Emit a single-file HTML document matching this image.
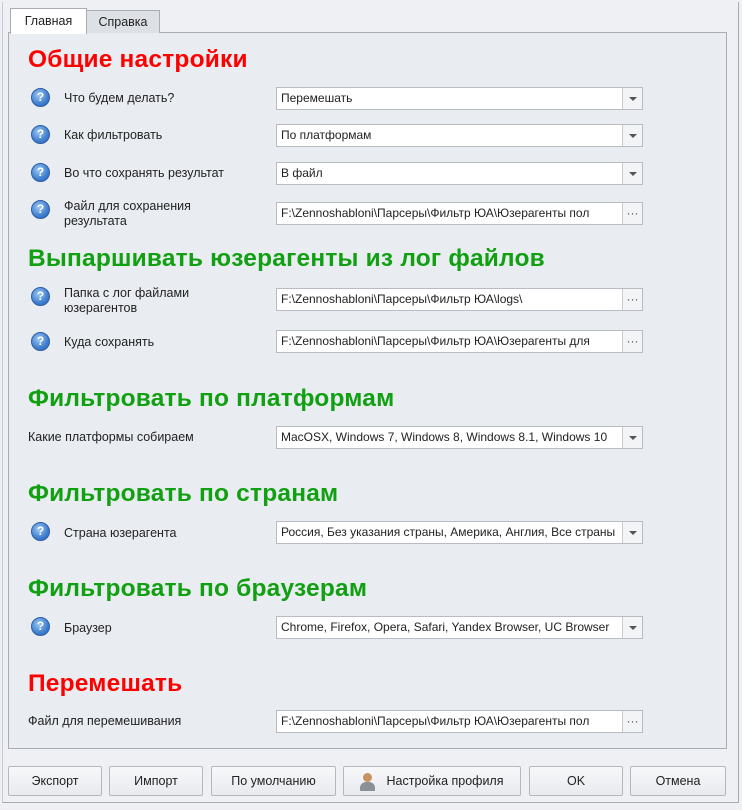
<!DOCTYPE html><html><head><meta charset="utf-8"><style>
body{margin:0;width:742px;height:810px;background:#eef0f3;font-family:"Liberation Sans",sans-serif;position:relative;overflow:hidden;font-size:12.5px;color:#222}
.a{position:absolute}
.frame{left:2px;top:2px;width:735px;height:800px;border:1px solid #a8acb2;border-top:none;border-left:1px solid #c8ccd0}
.panel{left:8px;top:32px;width:717px;height:715px;border:1px solid #a9adb3;background:#e9ecf0}
.tab{top:8px;height:24px;border:1px solid #a9adb3;border-bottom:none;line-height:24px;text-align:center;font-size:12.5px}
.h{font-weight:bold;font-size:24.5px;letter-spacing:0.2px;left:28px}
.r{color:#f00}.g{color:#11a011}
.q{width:17px;height:17px;border-radius:50%;background:radial-gradient(circle at 40% 35%,#9cc8f5,#3f7fd0 60%,#2a5fae);border:1px solid #2d5ea6;color:#fff;font-weight:bold;font-size:12px;text-align:center;line-height:17px;left:31px}
.l{left:64px}
.f{left:276px;width:365px;height:21px;border:1px solid #b8bcc2;background:#fff;line-height:21px;font-size:12px}
.f span{padding-left:4px;white-space:nowrap;overflow:hidden;display:block;width:338px}
.f span.e{text-overflow:ellipsis;width:336px}
.f i{position:absolute;right:0;top:0;width:19px;height:21px;border-left:1px solid #c8ccd2;background:#f3f4f6;font-style:normal;text-align:center;color:#555}
.ar:after{content:"";position:absolute;left:6px;top:9px;border:4px solid transparent;border-top:4px solid #555}
.b{top:766px;height:28px;border:1px solid #b4b8be;border-radius:2px;background:linear-gradient(#f7f8fa,#e8eaee);text-align:center;line-height:28px;font-size:12.5px}
</style></head><body>
<div class="a frame"></div>
<div class="a panel"></div>
<div class="a tab" style="left:10px;width:75px;background:#fff;height:25px">Главная</div>
<div class="a tab" style="left:86px;width:72px;background:#dde0e5;top:10px;height:22px;line-height:22px">Справка</div>
<div class="a" style="left:11px;top:32px;width:73px;height:2px;background:#fff"></div>

<div class="a h r" style="top:46px">Общие настройки</div>
<div class="a q" style="top:88px">?</div><div class="a l" style="top:91px">Что будем делать?</div>
<div class="a f" style="top:87px"><span>Перемешать</span><i class="ar"></i></div>
<div class="a q" style="top:125px">?</div><div class="a l" style="top:128px">Как фильтровать</div>
<div class="a f" style="top:124px"><span>По платформам</span><i class="ar"></i></div>
<div class="a q" style="top:163px">?</div><div class="a l" style="top:166px">Во что сохранять результат</div>
<div class="a f" style="top:162px"><span>В файл</span><i class="ar"></i></div>
<div class="a q" style="top:200px">?</div><div class="a l" style="top:199px;line-height:15px">Файл для сохранения<br>результата</div>
<div class="a f" style="top:202px"><span>F:\Zennoshabloni\Парсеры\Фильтр ЮА\Юзерагенты пол</span><i>···</i></div>

<div class="a h g" style="top:245px">Выпаршивать юзерагенты из лог файлов</div>
<div class="a q" style="top:287px">?</div><div class="a l" style="top:286px;line-height:15px">Папка с лог файлами<br>юзерагентов</div>
<div class="a f" style="top:288px"><span>F:\Zennoshabloni\Парсеры\Фильтр ЮА\logs\</span><i>···</i></div>
<div class="a q" style="top:332px">?</div><div class="a l" style="top:335px">Куда сохранять</div>
<div class="a f" style="top:330px"><span>F:\Zennoshabloni\Парсеры\Фильтр ЮА\Юзерагенты для</span><i>···</i></div>

<div class="a h g" style="top:385px">Фильтровать по платформам</div>
<div class="a" style="left:28px;top:430px">Какие платформы собираем</div>
<div class="a f" style="top:426px"><span class="e">MacOSX, Windows 7, Windows 8, Windows 8.1, Windows 10</span><i class="ar"></i></div>

<div class="a h g" style="top:480px">Фильтровать по странам</div>
<div class="a q" style="top:522px">?</div><div class="a l" style="top:526px">Страна юзерагента</div>
<div class="a f" style="top:521px"><span class="e">Россия, Без указания страны, Америка, Англия, Все страны</span><i class="ar"></i></div>

<div class="a h g" style="top:575px">Фильтровать по браузерам</div>
<div class="a q" style="top:617px">?</div><div class="a l" style="top:621px">Браузер</div>
<div class="a f" style="top:616px"><span class="e">Chrome, Firefox, Opera, Safari, Yandex Browser, UC Browser</span><i class="ar"></i></div>

<div class="a h r" style="top:670px">Перемешать</div>
<div class="a" style="left:28px;top:714px">Файл для перемешивания</div>
<div class="a f" style="top:710px"><span>F:\Zennoshabloni\Парсеры\Фильтр ЮА\Юзерагенты пол</span><i>···</i></div>

<div class="a b" style="left:8px;width:92px">Экспорт</div>
<div class="a b" style="left:109px;width:92px">Импорт</div>
<div class="a b" style="left:211px;width:123px">По умолчанию</div>
<div class="a b" style="left:343px;width:176px"><span style="display:inline-block;width:14px;height:18px;vertical-align:middle;margin-right:12px;position:relative"><span style="position:absolute;left:3px;top:0;width:9px;height:9px;border-radius:50%;background:#c8925e"></span><span style="position:absolute;left:0;top:9px;width:15px;height:9px;border-radius:6px 6px 1px 1px;background:#8a9098"></span></span>Настройка профиля</div>
<div class="a b" style="left:529px;width:92px">OK</div>
<div class="a b" style="left:630px;width:94px">Отмена</div>
</body></html>
